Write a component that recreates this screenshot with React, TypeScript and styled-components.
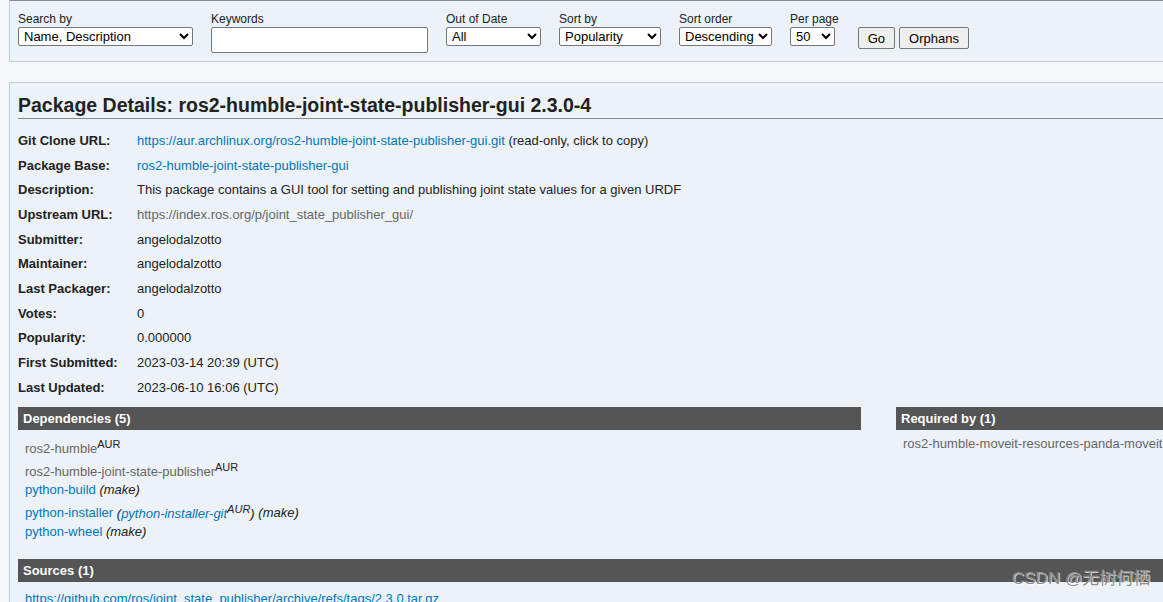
import React from 'react';
import styled, { createGlobalStyle } from 'styled-components';

const GlobalStyle = createGlobalStyle`
  html, body {
    margin: 0;
    padding: 0;
    background: #f6f9fc;
    overflow: hidden;
  }
  body {
    font-family: "Liberation Sans", Arial, sans-serif;
    font-size: 13px;
    color: #222;
  }
`;

const Page = styled.div`
  width: 1208px;
  padding-left: 9px;
  position: relative;
  height: 602px;
`;

const Box = styled.section<{ $topBorder?: string }>`
  background: #ecf2f7;
  border: 1px solid #bccddc;
  border-top-color: ${(p) => p.$topBorder || '#bccddc'};
  padding: 0 8px;
`;

const SearchBox = styled(Box)`
  padding-top: 11px;
  box-sizing: border-box;
  height: 62px;
  margin-bottom: 20px;
`;

const SearchForm = styled.form`
  display: flex;
  align-items: flex-start;
  gap: 18px;
`;

const Field = styled.div`
  display: flex;
  flex-direction: column;
`;

const FieldLabel = styled.label`
  font-size: 12px;
  line-height: 15px;
  height: 15px;
  color: #222;
`;

const Select = styled.select<{ $w: number }>`
  width: ${(p) => p.$w}px;
  height: 19px;
  padding: 0 0 0 1px;
  font-family: "Liberation Sans", Arial, sans-serif;
  font-size: 13px;
  color: #000;
  background: #fff;
  border: 1px solid #767676;
  border-radius: 2px;
  box-sizing: border-box;
`;

const TextInput = styled.input`
  width: 217px;
  height: 26px;
  box-sizing: border-box;
  border: 1px solid #767676;
  border-radius: 2px;
  background: #fff;
`;

const Buttons = styled.div`
  display: flex;
  gap: 4px;
  padding-top: 15px;
  margin-left: 1px;
`;

const Button = styled.button`
  height: 22px;
  padding: 0 9px;
  font-family: "Liberation Sans", Arial, sans-serif;
  font-size: 13px;
  color: #000;
  background: #efefef;
  border: 1px solid #767676;
  border-radius: 2px;
`;

const DetailsBox = styled(Box)`
  padding-top: 11px;
  height: 560px;
`;

const Title = styled.h2`
  margin: 0 0 9px;
  padding-bottom: 2px;
  font-size: 19.5px;
  line-height: 22px;
  font-weight: bold;
  color: #222;
  border-bottom: 1px solid #888;
`;

const InfoTable = styled.div`
  display: grid;
  grid-template-columns: 119px 1fr;
  grid-auto-rows: 24.7px;
  align-items: center;
  margin-bottom: 7px;
`;

const InfoLabel = styled.div`
  font-weight: bold;
`;

const InfoValue = styled.div``;

const Link = styled.a<{ $visited?: boolean }>`
  color: ${(p) => (p.$visited ? '#666' : '#07b')};
  text-decoration: none;
`;

const Columns = styled.div`
  display: grid;
  grid-template-columns: 843px 1fr;
  column-gap: 35px;
`;

const SectionBar = styled.h3`
  margin: 0;
  height: 23px;
  line-height: 23px;
  padding: 0 5px;
  background: #555;
  color: #fff;
  font-size: 13px;
  font-weight: bold;
`;

const DepList = styled.ul`
  list-style: none;
  margin: 5px 0 0;
  padding: 0 0 0 7px;
  min-height: 124px;
`;

const DepItem = styled.li`
  line-height: 18px;
  white-space: nowrap;
`;

const Tag = styled.sup`
  font-size: 11px;
  color: #222;
`;

const Note = styled.em`
  color: #222;
`;

const SourceList = styled.ul`
  list-style: none;
  margin: 8px 0 0;
  padding: 0 0 0 7px;
  line-height: 18px;
`;

const Watermark = styled.div`
  position: absolute;
  left: 1012px;
  top: 569px;
  font-family: "Liberation Sans", "Noto Sans CJK SC", sans-serif;
  font-size: 17px;
  line-height: 20px;
  color: #8e8e8e;
  text-shadow: 1px 1px 0 rgba(255, 255, 255, 0.7);
  white-space: nowrap;
`;

const info: { label: string; value: React.ReactNode }[] = [
  {
    label: 'Git Clone URL:',
    value: (
      <>
        <Link href="#">https://aur.archlinux.org/ros2-humble-joint-state-publisher-gui.git</Link> (read-only, click to copy)
      </>
    ),
  },
  { label: 'Package Base:', value: <Link href="#">ros2-humble-joint-state-publisher-gui</Link> },
  {
    label: 'Description:',
    value: 'This package contains a GUI tool for setting and publishing joint state values for a given URDF',
  },
  {
    label: 'Upstream URL:',
    value: (
      <Link href="#" $visited>
        https://index.ros.org/p/joint_state_publisher_gui/
      </Link>
    ),
  },
  { label: 'Submitter:', value: 'angelodalzotto' },
  { label: 'Maintainer:', value: 'angelodalzotto' },
  { label: 'Last Packager:', value: 'angelodalzotto' },
  { label: 'Votes:', value: '0' },
  { label: 'Popularity:', value: '0.000000' },
  { label: 'First Submitted:', value: '2023-03-14 20:39 (UTC)' },
  { label: 'Last Updated:', value: '2023-06-10 16:06 (UTC)' },
];

const App = () => {
  return (
    <Page>
      <GlobalStyle />
      <SearchBox $topBorder="#8c8c8c">
        <SearchForm onSubmit={(e) => e.preventDefault()}>
          <Field>
            <FieldLabel>Search by</FieldLabel>
            <Select $w={175} defaultValue="nd">
              <option value="nd">Name, Description</option>
            </Select>
          </Field>
          <Field>
            <FieldLabel>Keywords</FieldLabel>
            <TextInput type="text" />
          </Field>
          <Field>
            <FieldLabel>Out of Date</FieldLabel>
            <Select $w={95}>
              <option>All</option>
            </Select>
          </Field>
          <Field>
            <FieldLabel>Sort by</FieldLabel>
            <Select $w={102}>
              <option>Popularity</option>
            </Select>
          </Field>
          <Field>
            <FieldLabel>Sort order</FieldLabel>
            <Select $w={93}>
              <option>Descending</option>
            </Select>
          </Field>
          <Field>
            <FieldLabel>Per page</FieldLabel>
            <Select $w={45}>
              <option>50</option>
            </Select>
          </Field>
          <Buttons>
            <Button type="submit">Go</Button>
            <Button type="button">Orphans</Button>
          </Buttons>
        </SearchForm>
      </SearchBox>

      <DetailsBox>
        <Title>Package Details: ros2-humble-joint-state-publisher-gui 2.3.0-4</Title>
        <InfoTable>
          {info.map((row) => (
            <React.Fragment key={row.label}>
              <InfoLabel>{row.label}</InfoLabel>
              <InfoValue>{row.value}</InfoValue>
            </React.Fragment>
          ))}
        </InfoTable>

        <Columns>
          <div>
            <SectionBar>Dependencies (5)</SectionBar>
            <DepList>
              <DepItem>
                <Link href="#" $visited>ros2-humble</Link>
                <Tag>AUR</Tag>
              </DepItem>
              <DepItem>
                <Link href="#" $visited>ros2-humble-joint-state-publisher</Link>
                <Tag>AUR</Tag>
              </DepItem>
              <DepItem>
                <Link href="#">python-build</Link> <Note>(make)</Note>
              </DepItem>
              <DepItem>
                <Link href="#">python-installer</Link>{' '}
                <Note>
                  (<Link href="#">python-installer-git</Link>
                  <Tag>AUR</Tag>)
                </Note>{' '}
                <Note>(make)</Note>
              </DepItem>
              <DepItem>
                <Link href="#">python-wheel</Link> <Note>(make)</Note>
              </DepItem>
            </DepList>
          </div>
          <div>
            <SectionBar>Required by (1)</SectionBar>
            <DepList>
              <DepItem>
                <Link href="#" $visited>ros2-humble-moveit-resources-panda-moveit-config</Link>
              </DepItem>
            </DepList>
          </div>
        </Columns>

        <SectionBar>Sources (1)</SectionBar>
        <SourceList>
          <li>
            <Link href="#">https://github.com/ros/joint_state_publisher/archive/refs/tags/2.3.0.tar.gz</Link>
          </li>
        </SourceList>
      </DetailsBox>
      <Watermark>CSDN @无树何栖</Watermark>
    </Page>
  );
};

export default App;
